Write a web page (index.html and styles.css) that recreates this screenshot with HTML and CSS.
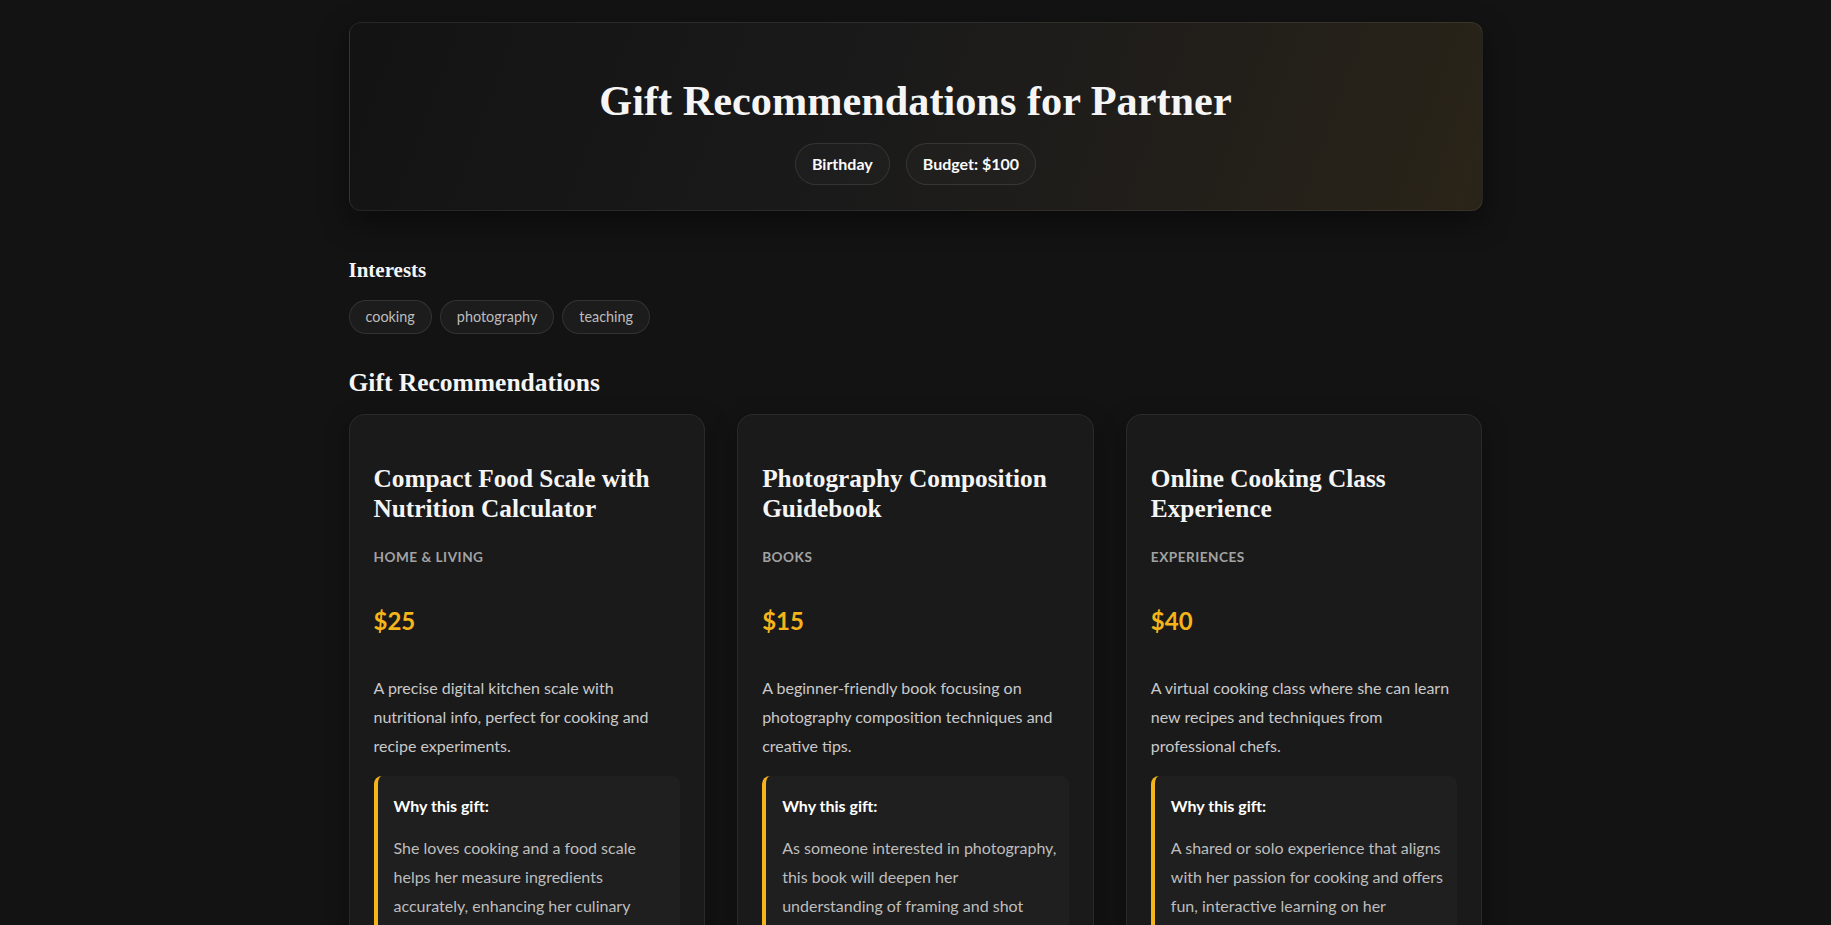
FILE: index.html
```html
<!DOCTYPE html>
<html lang="en">
<head>
  <meta charset="UTF-8">
  <title>Gift Recommendations for Partner</title>
  <link rel="stylesheet" href="styles.css">
</head>
<body>
<div class="container">
  <header class="hero">
    <h1>Gift Recommendations for Partner</h1>
    <div class="hero-tags">
      <span class="hero-tag">Birthday</span>
      <span class="hero-tag">Budget: $100</span>
    </div>
  </header>

  <section class="interests">
    <h2>Interests</h2>
    <div class="interest-list">
      <span class="interest">cooking</span>
      <span class="interest">photography</span>
      <span class="interest">teaching</span>
    </div>
  </section>

  <section class="recommendations">
    <h2>Gift Recommendations</h2>
    <div class="gift-grid">
      <div class="gift-card">
        <h3 class="gift-name">Compact Food Scale with Nutrition Calculator</h3>
        <div class="gift-category">Home &amp; Living</div>
        <div class="gift-price">$25</div>
        <p class="gift-description">A precise digital kitchen scale with nutritional info, perfect for cooking and recipe experiments.</p>
        <div class="gift-reason">
          <strong>Why this gift:</strong>
          <p>She loves cooking and a food scale helps her measure ingredients accurately, enhancing her culinary experiments.</p>
        </div>
      </div>

      <div class="gift-card">
        <h3 class="gift-name">Photography Composition Guidebook</h3>
        <div class="gift-category">Books</div>
        <div class="gift-price">$15</div>
        <p class="gift-description">A beginner-friendly book focusing on photography composition techniques and creative tips.</p>
        <div class="gift-reason">
          <strong>Why this gift:</strong>
          <p>As someone interested in photography, this book will deepen her understanding of framing and shot composition.</p>
        </div>
      </div>

      <div class="gift-card">
        <h3 class="gift-name">Online Cooking Class Experience</h3>
        <div class="gift-category">Experiences</div>
        <div class="gift-price">$40</div>
        <p class="gift-description">A virtual cooking class where she can learn new recipes and techniques from professional chefs.</p>
        <div class="gift-reason">
          <strong>Why this gift:</strong>
          <p>A shared or solo experience that aligns with her passion for cooking and offers fun, interactive learning on her weekends.</p>
        </div>
      </div>
    </div>
  </section>
</div>
</body>
</html>
```

FILE: styles.css
```css
body {
  margin: 0;
  background-color: #131313;
  color: #e8e8e8;
  font-family: Lato, "Liberation Sans", sans-serif;
  font-size: 16px;
}
h1, h2, h3 {
  font-family: "Liberation Serif", "Times New Roman", serif;
  font-weight: 700;
  color: #f5f5f5;
}
.container {
  max-width: 1134px;
  margin: 0 auto;
  padding: 22px 0 48px;
}

/* header */
.hero {
  text-align: center;
  padding: 50px 32px 25px;
  border: 1px solid rgba(255, 255, 255, 0.08);
  border-radius: 12px;
  background: linear-gradient(110deg, #131313 0%, #1a1a1a 45%, #221f1a 75%, #2a2418 100%);
  box-shadow: 0 10px 30px rgba(0, 0, 0, 0.45);
}
.hero h1 {
  font-size: 42.3px;
  line-height: 56px;
  margin: 0 0 14px;
}
.hero-tags {
  display: flex;
  justify-content: center;
  gap: 16px;
}
.hero-tag {
  padding: 8px 16px;
  border: 1px solid rgba(255, 255, 255, 0.1);
  border-radius: 999px;
  background: rgba(255, 255, 255, 0.02);
  font-weight: 700;
  line-height: 24px;
  color: #fafafa;
}

/* interests */
.interests {
  margin-top: 47px;
}
.interests h2 {
  font-size: 21px;
  margin: 0 0 17px;
}
.interest-list {
  display: flex;
  gap: 8px;
}
.interest {
  padding: 5px 16px;
  border: 1px solid rgba(255, 255, 255, 0.1);
  border-radius: 999px;
  background: rgba(255, 255, 255, 0.04);
  font-size: 14.4px;
  line-height: 22px;
  color: #bcbcbc;
}

/* recommendations */
.recommendations {
  margin-top: 34px;
}
.recommendations h2 {
  font-size: 25.5px;
  margin: 0 0 16px;
}
.gift-grid {
  display: grid;
  grid-template-columns: repeat(3, 1fr);
  gap: 32px;
}
.gift-card {
  background-color: #1a1a1a;
  border: 1px solid rgba(255, 255, 255, 0.07);
  border-radius: 16px;
  padding: 48px 24px 24px;
  box-shadow: 0 8px 24px rgba(0, 0, 0, 0.35);
}
.gift-name {
  font-size: 25.3px;
  line-height: 30px;
  margin: 0 0 26px;
}
.gift-category {
  font-size: 13.6px;
  font-weight: 700;
  text-transform: uppercase;
  letter-spacing: 0.5px;
  color: #a3a3a3;
}
.gift-price {
  margin-top: 41px;
  font-size: 24px;
  font-weight: 700;
  color: #f4b41a;
}
.gift-description {
  margin: 39px 0 16px;
  line-height: 1.8;
  color: #c9c9c9;
}
.gift-reason {
  background-color: #1f1f1f;
  border-left: 4px solid #f4b41a;
  border-radius: 8px;
  padding: 16px 12px 16px 16px;
}
.gift-reason strong {
  display: block;
  line-height: 1.8;
  color: #ffffff;
}
.gift-reason p {
  margin: 13px 0 0;
  line-height: 1.8;
  color: #bdbdbd;
}
```
